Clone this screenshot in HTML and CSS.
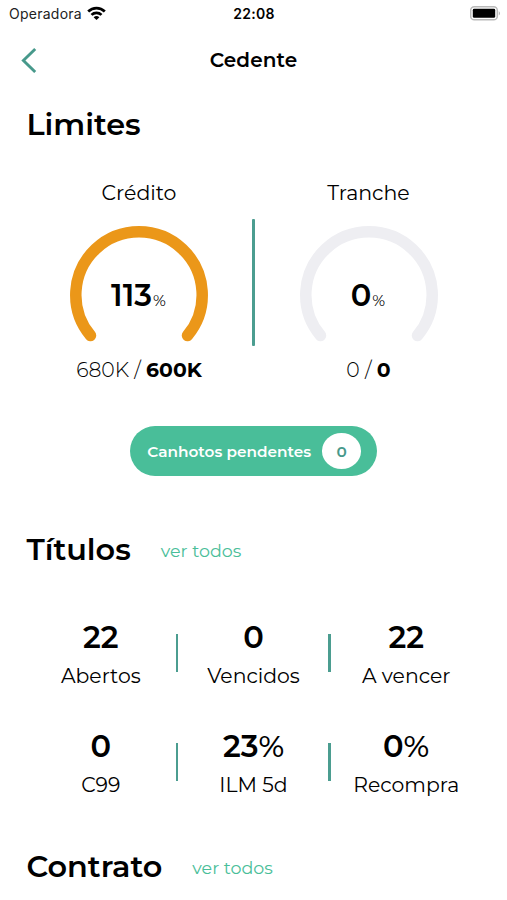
FILE: index.html
```html
<!DOCTYPE html>
<html lang="pt-BR">
<head>
<meta charset="utf-8">
<meta name="viewport" content="width=device-width, initial-scale=1">
<title>Cedente</title>
<link rel="stylesheet" href="styles.css">
</head>
<body>
<div class="status">
  <div class="carrier"><span>Operadora</span>
    <svg width="19" height="15" viewBox="0 0 19 15" fill="none" stroke="#000" stroke-width="2.7"><path d="M1.2 5.5C5.8 .9 13.2 .9 17.8 5.5"/><path d="M4.5 8.9C7.3 6.2 11.7 6.2 14.5 8.9"/><path d="M9.5 14L6.6 11.3Q9.5 8.9 12.4 11.3Z" fill="#000" stroke="none"/></svg>
  </div>
  <time class="clock">22:08</time>
  <svg class="battery" width="31" height="15" viewBox="0 0 31 15"><rect x=".7" y=".8" width="26.6" height="13" rx="3.6" fill="#fff" stroke="#b9b9b9" stroke-width="1.5"/><rect x="2.8" y="2.8" width="22.4" height="9" rx="1.4"/><path d="M28.8 5Q31 7.3 28.8 9.6Z" fill="#aaa"/></svg>
</div>
<header class="nav">
  <svg class="back" width="16" height="26" viewBox="0 0 16 26" fill="none" stroke="#47998b" stroke-width="2.9"><path d="M14.2 2L2.4 13.5L14.2 25"/></svg>
  <h1 class="nav-title">Cedente</h1>
</header>
<main>
  <section class="limits">
    <h2 class="heading">Limites</h2>
    <div class="gauges">
      <div class="gauge">
        <div class="label">Crédito</div>
        <div class="dial">
          <svg width="140" height="120" viewBox="0 0 140 120"><path d="M21.5 110.5A63.2 63.2 0 1 1 118.5 110.5" fill="none" stroke="#eb9719" stroke-width="11.5" stroke-linecap="round"/></svg>
          <div class="percent"><span>113</span><small>%</small></div>
        </div>
        <div class="amount"><span>680K / </span><b>600K</b></div>
      </div>
      <div class="split"></div>
      <div class="gauge">
        <div class="label">Tranche</div>
        <div class="dial">
          <svg width="140" height="120" viewBox="0 0 140 120"><path d="M21.5 110.5A63.2 63.2 0 1 1 118.5 110.5" fill="none" stroke="#eeeef2" stroke-width="11.5" stroke-linecap="round"/></svg>
          <div class="percent"><span>0</span><small>%</small></div>
        </div>
        <div class="amount"><span>0 / </span><b>0</b></div>
      </div>
    </div>
    <div class="pill"><span>Canhotos pendentes</span><span class="badge">0</span></div>
  </section>
  <section>
    <div class="head"><h2 class="heading">Títulos</h2><a class="more">ver todos</a></div>
    <div class="stats">
      <div class="stat"><b>22</b><span>Abertos</span></div>
      <div class="stat"><b>0</b><span>Vencidos</span></div>
      <div class="stat"><b>22</b><span>A vencer</span></div>
      <div class="stat"><b>0</b><span>C99</span></div>
      <div class="stat"><b>23<i>%</i></b><span>ILM 5d</span></div>
      <div class="stat"><b>0<i>%</i></b><span>Recompra</span></div>
    </div>
  </section>
  <section>
    <div class="head contract"><h2 class="heading">Contrato</h2><a class="more">ver todos</a></div>
  </section>
</main>
</body>
</html>
```
FILE: styles.css
```css
* { box-sizing: border-box; }
body {
  margin: 0;
  height: 900px;
  overflow: hidden;
  background: #fff;
  color: #000;
  font-family: Montserrat, Inter, "Liberation Sans", sans-serif;
  font-size: 20px;
  white-space: nowrap;
}
svg { display: block; flex: none; }
h1, h2 { margin: 0; }
.status {
  display: grid;
  grid-template-columns: 1fr auto 1fr;
  align-items: center;
  height: 27px;
  padding: 0 6px 0 9px;
  font-family: Inter, "Liberation Sans", sans-serif;
  font-size: 14px;
}
.carrier { display: flex; align-items: center; gap: 5px; color: #222; letter-spacing: .25px; }
.carrier svg { margin-top: -1px; }
.clock { font-weight: 600; letter-spacing: .3px; margin-left: -2px; }
.battery { justify-self: end; }
.nav {
  display: grid;
  grid-template-columns: 1fr auto 1fr;
  align-items: center;
  height: 66px;
  padding: 0 21px;
}
.nav-title { font-size: 20px; font-weight: 600; letter-spacing: .1px; line-height: 26px; }
.heading { font-size: 30.3px; font-weight: 600; line-height: 40px; }
.limits { padding-top: 12px; }
.limits .heading, .head { margin-left: 26.4px; }
.gauges { display: grid; grid-template-columns: 228px 3px 228px; justify-content: center; margin-top: 35px; }
.gauge { display: flex; flex-direction: column; align-items: center; }
.gauge:first-child { padding-left: 2px; }
.gauge:last-child { padding-right: 1px; }
.label { line-height: 26px; font-size: 20.5px; font-weight: 450; }
.dial { display: grid; place-items: center; margin-top: 19px; height: 120px; }
.dial > * { grid-area: 1 / 1; }
.percent { display: flex; align-items: baseline; gap: 1px; font-size: 30.5px; font-weight: 600; line-height: 40px; margin: 25px 1px 0 0; }
.percent small { font-size: 15.5px; font-weight: 450; }
.amount { margin-top: 12px; font-size: 20.4px; line-height: 26px; font-weight: 300; white-space: pre; }
.amount b { font-weight: 700; }
.split { width: 2.5px; height: 127px; margin-top: 39px; background: #4b9d90; border-radius: 1px; }
.pill {
  display: flex;
  align-items: center;
  justify-content: space-between;
  width: 247px;
  height: 50px;
  margin: 43.4px auto 0 130.3px;
  padding: 0 16px 0 17px;
  border-radius: 25px;
  background: #49be99;
  color: #fff;
  font-size: 15.3px;
  font-weight: 600;
}
.badge { display: grid; place-items: center; width: 39.5px; height: 36px; border-radius: 50%; background: #fff; color: #47998b; }
.head { display: flex; align-items: center; gap: 30px; height: 40px; margin-top: 53.6px; }
.head .heading { padding-top: 1px; }
.more { padding-top: 2px; font-size: 17.5px; color: #49be99; }
.stats { display: grid; grid-template-columns: repeat(3, 152.7px); justify-content: center; row-gap: 30.5px; margin-top: 47px; }
.stat { position: relative; display: flex; flex-direction: column; align-items: center; height: 78.5px; }
.stat b { font-size: 30.5px; font-weight: 600; line-height: 40px; }
.stat i { font-style: normal; font-weight: 500; }
.stat span { line-height: 26px; margin-top: 6px; font-size: 20.4px; font-weight: 450; }
.stat:not(:nth-child(3n))::after {
  content: "";
  position: absolute;
  right: -1px;
  top: 17px;
  width: 2.5px;
  height: 38px;
  background: #4b9d90;
}
.head.contract { margin-top: 42px; }
```
